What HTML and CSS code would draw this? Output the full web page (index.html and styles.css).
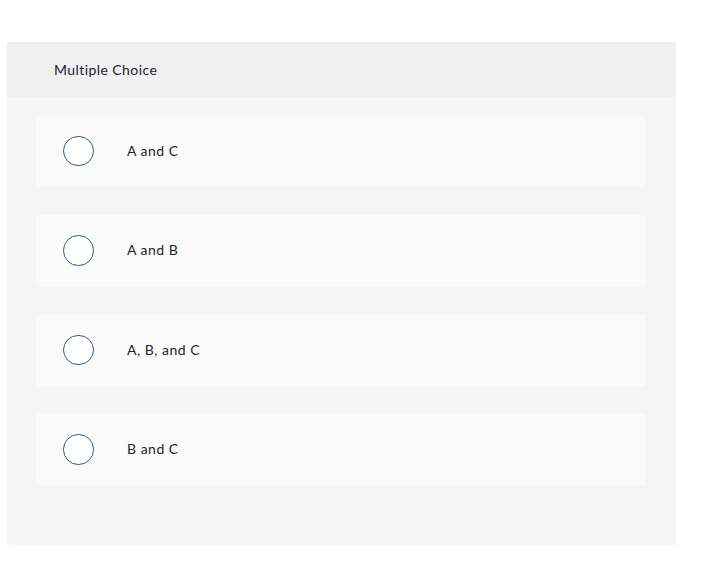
FILE: index.html
```html
<!DOCTYPE html>
<html>
<head>
<meta charset="utf-8">
<link rel="stylesheet" href="styles.css">
</head>
<body>
<div class="card">
  <div class="card-header">Multiple Choice</div>
  <div class="card-body">
    <div class="option"><span class="radio"></span><span class="label">A and C</span></div>
    <div class="option"><span class="radio"></span><span class="label">A and B</span></div>
    <div class="option"><span class="radio"></span><span class="label">A, B, and C</span></div>
    <div class="option"><span class="radio"></span><span class="label">B and C</span></div>
  </div>
</div>
</body>
</html>
```

FILE: styles.css
```css
html, body {
  margin: 0;
  padding: 0;
  background: #ffffff;
}
body {
  padding: 42px 0 0 7px;
  font-family: Lato, "Liberation Sans", sans-serif;
  color: #1e1e2c;
}
.card {
  width: 669px;
  height: 503px;
  background: #f5f5f5;
  border-radius: 3px;
  overflow: hidden;
  display: flex;
  flex-direction: column;
}
.card-header {
  height: 55px;
  background: #f0f0f0;
  display: flex;
  align-items: center;
  padding-left: 47px;
  font-size: 14px;
  color: #23232f;
  letter-spacing: 0.42px;
}
.card-body {
  padding: 18px 31px 0 29px;
  display: flex;
  flex-direction: column;
  gap: 27.5px;
}
.option {
  height: 72px;
  background: #fafafa;
  border-radius: 3px;
  display: flex;
  align-items: center;
  padding-left: 27px;
}
.radio {
  width: 28.5px;
  height: 28.5px;
  border: 1.5px solid #2e5c8a;
  border-radius: 50%;
  background: #fff;
  flex: none;
}
.label {
  margin-left: 33.5px;
  font-size: 14px;
  letter-spacing: 0.5px;
  transform: translateY(-1px);
}
```
